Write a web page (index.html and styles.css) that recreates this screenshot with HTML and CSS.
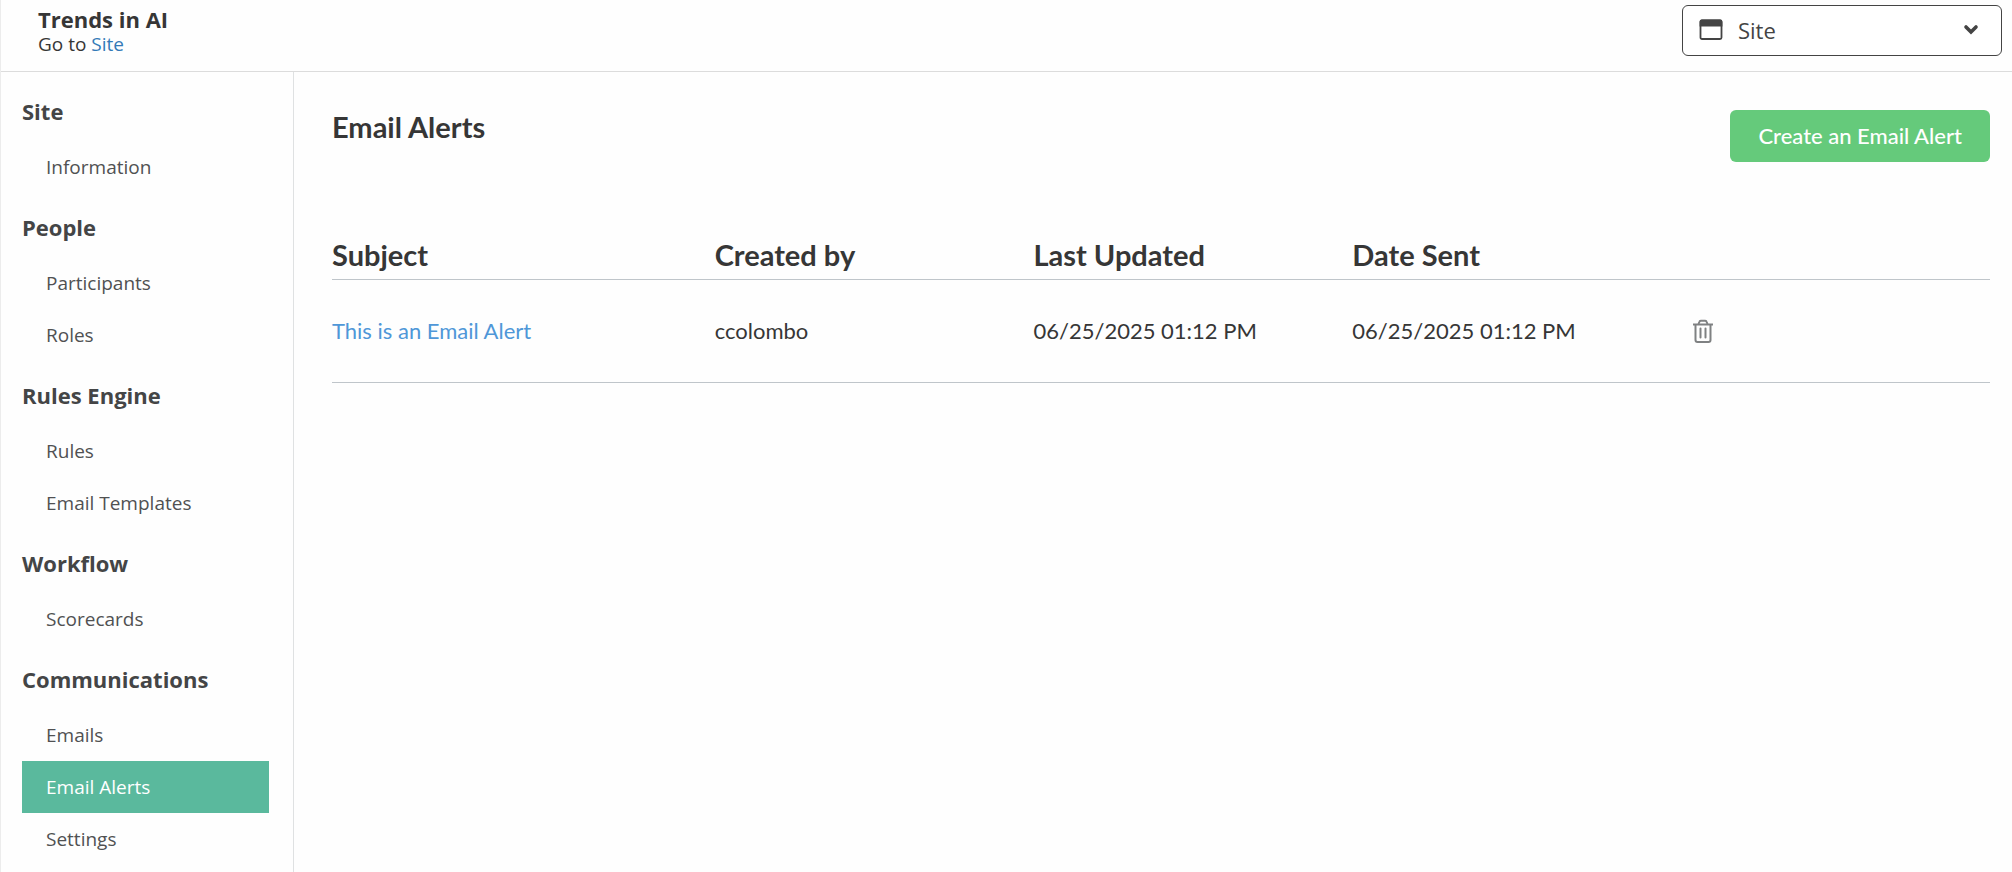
FILE: index.html
```html
<!DOCTYPE html>
<html lang="en">
<head>
<meta charset="utf-8">
<title>Email Alerts - Trends in AI</title>
<link rel="stylesheet" href="styles.css">
</head>
<body>
<div class="page">
  <header class="topbar">
    <div class="brand">
      <h1 class="brand-title">Trends in AI</h1>
      <p class="brand-sub">Go to <a href="#site">Site</a></p>
    </div>
    <div class="picker">
      <select class="picker-select" aria-label="Area">
        <option>Site</option>
      </select>
      <svg class="picker-icon" width="24" height="22" viewBox="0 0 24 22" aria-hidden="true">
        <rect x="1.5" y="1.5" width="21" height="18.5" rx="1.5" fill="none" stroke="#444" stroke-width="1.8"/>
        <path d="M.6 7.5v-5a2 2 0 0 1 2-2h18.8a2 2 0 0 1 2 2v5z" fill="#444"/>
      </svg>
      <svg class="picker-caret" width="16" height="12" viewBox="0 0 16 12" aria-hidden="true">
        <path d="M3 3l5 5 5-5" fill="none" stroke="#444" stroke-width="3.6" stroke-linecap="round" stroke-linejoin="miter"/>
      </svg>
    </div>
  </header>
  <div class="body">
    <nav class="sidebar" aria-label="Site settings">
      <section class="group">
        <h2 class="group-title">Site</h2>
        <ul class="items">
          <li><a class="item" href="#information">Information</a></li>
        </ul>
      </section>
      <section class="group">
        <h2 class="group-title">People</h2>
        <ul class="items">
          <li><a class="item" href="#participants">Participants</a></li>
          <li><a class="item" href="#roles">Roles</a></li>
        </ul>
      </section>
      <section class="group">
        <h2 class="group-title">Rules Engine</h2>
        <ul class="items">
          <li><a class="item" href="#rules">Rules</a></li>
          <li><a class="item" href="#templates">Email Templates</a></li>
        </ul>
      </section>
      <section class="group">
        <h2 class="group-title">Workflow</h2>
        <ul class="items">
          <li><a class="item" href="#scorecards">Scorecards</a></li>
        </ul>
      </section>
      <section class="group">
        <h2 class="group-title">Communications</h2>
        <ul class="items">
          <li><a class="item" href="#emails">Emails</a></li>
          <li><a class="item item-active" href="#alerts" aria-current="page">Email Alerts</a></li>
          <li><a class="item" href="#settings">Settings</a></li>
        </ul>
      </section>
    </nav>
    <main class="content">
      <div class="content-head">
        <h2 class="content-title">Email Alerts</h2>
        <button class="create" type="button">Create an Email Alert</button>
      </div>
      <table class="alerts">
        <colgroup>
          <col class="col-subject"><col><col><col><col>
        </colgroup>
        <thead>
          <tr>
            <th scope="col">Subject</th>
            <th scope="col">Created by</th>
            <th scope="col">Last Updated</th>
            <th scope="col">Date Sent</th>
            <td></td>
          </tr>
        </thead>
        <tbody>
          <tr>
            <td><a href="#alert">This is an Email Alert</a></td>
            <td>ccolombo</td>
            <td>06/25/2025 01:12 PM</td>
            <td>06/25/2025 01:12 PM</td>
            <td class="actions">
              <button class="delete" type="button" aria-label="Delete">
                <svg width="20" height="24" viewBox="0 0 20 24" aria-hidden="true" fill="none" stroke="#7f8182" stroke-width="2">
                  <path d="M0 5.5h20"/>
                  <path d="M2.5 5.5v15.5a2 2 0 0 0 2 2h11a2 2 0 0 0 2-2v-15.5"/>
                  <path d="M5.5 5l.8-2a1.6 1.6 0 0 1 1.5-1.2h4.4a1.6 1.6 0 0 1 1.5 1.2l.8 2"/>
                  <path d="M7.5 9.5v9M12.5 9.5v9" stroke-linecap="round"/>
                </svg>
              </button>
            </td>
          </tr>
        </tbody>
      </table>
    </main>
  </div>
</div>
</body>
</html>
```
FILE: styles.css
```css
* {
  box-sizing: border-box;
}

body {
  margin: 0;
  background: #fefefe;
  color: #363636;
  font-family: "Open Sans", "Noto Sans", sans-serif;
}

h1, h2, p, ul {
  margin: 0;
  padding: 0;
}

a {
  text-decoration: none;
}

.page {
  display: flex;
  flex-direction: column;
  min-height: 100vh;
  border-left: 1px solid #ececec;
}

.topbar {
  display: flex;
  justify-content: space-between;
  align-items: flex-start;
  padding: 5px 10px 15px 37px;
  border-bottom: 1px solid #dcdcdc;
}

.brand-title {
  font-size: 22px;
  line-height: 28px;
  font-weight: 700;
}

.brand-sub {
  font-size: 19px;
  line-height: 22px;
}

.brand-sub a {
  color: #337ab7;
}

.picker {
  position: relative;
  width: 320px;
}

.picker-select {
  display: block;
  width: 100%;
  height: 51px;
  padding: 0 48px 2px 55px;
  border: 1px solid #444;
  border-radius: 6px;
  background: #fff;
  color: #444;
  font: 22px "Open Sans", "Noto Sans", sans-serif;
  appearance: none;
}

.picker-icon,
.picker-caret {
  position: absolute;
  pointer-events: none;
}

.picker-icon {
  top: 14px;
  left: 17px;
}

.picker-caret {
  top: 19px;
  right: 23px;
}

.body {
  display: flex;
  flex: 1;
}

.sidebar {
  flex: none;
  width: 293px;
  padding: 23px 24px 0 21px;
  border-right: 1px solid #dfe1e2;
}

.group {
  padding-bottom: 18px;
}

.group:last-child {
  padding-bottom: 0;
}

.group-title {
  padding-bottom: 14px;
  color: #444546;
  font-size: 22px;
  line-height: 32px;
  font-weight: 700;
}

.items {
  list-style: none;
}

.item {
  display: block;
  padding-left: 24px;
  color: #505152;
  font-size: 19px;
  line-height: 52px;
}

.item-active {
  background: #5ab99d;
  color: #fff;
}

.content {
  flex: 1;
  padding: 38px 22px 0 38px;
  font-family: Lato, "Noto Sans", sans-serif;
}

.content-head {
  display: flex;
  justify-content: space-between;
  align-items: flex-start;
}

.content-title {
  font-size: 29px;
  line-height: 34px;
  font-weight: 700;
}

.create {
  height: 52px;
  padding: 0 28px 2px;
  border: 0;
  border-radius: 6px;
  background: #65ca7b;
  color: #fff;
  font: 500 22px Lato, "Noto Sans", sans-serif;
}

.alerts {
  width: 100%;
  margin-top: 73px;
  border-collapse: collapse;
  table-layout: fixed;
  text-align: left;
}

.col-subject {
  width: 23.08%;
}

.alerts th,
.alerts td {
  padding: 0;
}

.alerts th {
  padding-bottom: 4px;
  font-size: 29px;
  line-height: 40px;
  font-weight: 700;
}

.alerts tr {
  border-bottom: 1px solid #bfc5ca;
}

.alerts tbody td {
  height: 103px;
  padding-bottom: 2px;
  font-size: 22px;
}

.alerts a {
  color: #4f97d8;
}

.alerts tbody .actions {
  padding: 0 0 0 22px;
}

.delete {
  display: block;
  padding: 0;
  border: 0;
  background: none;
}

.delete svg {
  display: block;
}
```
